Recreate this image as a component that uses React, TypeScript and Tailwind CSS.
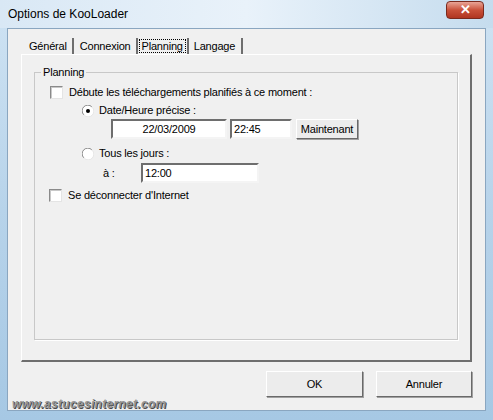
import React from 'react';

const font = { fontFamily: '"Liberation Sans", Arial, sans-serif' };

function Checkbox() {
  return (
    <span className="inline-block shrink-0 w-[13px] h-[13px] bg-white border border-t-[#8a8a8a] border-l-[#8a8a8a] border-b-[#e4e4e4] border-r-[#e4e4e4] shadow-[inset_1px_1px_0_#c8c8c8]" />
  );
}

function Radio({ checked }: { checked?: boolean }) {
  return (
    <svg width="12" height="12" viewBox="0 0 12 12" className="shrink-0">
      <circle cx="6" cy="6" r="5.5" fill="#fff" />
      <path d="M1.8 9.8 A5.2 5.2 0 0 1 9.8 1.8" fill="none" stroke="#8a8a8a" strokeWidth="1" />
      <path d="M10.2 2.2 A5.2 5.2 0 0 1 2.2 10.2" fill="none" stroke="#e6e6e6" strokeWidth="1" />
      {checked && <circle cx="6" cy="6" r="2" fill="#000" />}
    </svg>
  );
}

function Field({ children, className }: { children: React.ReactNode; className: string }) {
  return (
    <div
      className={`h-[20px] bg-white border-2 border-t-[#6e6e6e] border-l-[#6e6e6e] border-b-[#f4f4f4] border-r-[#f4f4f4] leading-[16px] text-black flex items-center ${className}`}
    >
      {children}
    </div>
  );
}

function WinButton({ label, className }: { label: string; className: string }) {
  return (
    <div
      className={`bg-[#ececec] border border-t-white border-l-white border-b-[#696969] border-r-[#696969] shadow-[1px_1px_0_#a0a0a0] flex items-center justify-center text-black ${className}`}
    >
      {label}
    </div>
  );
}

export default function App() {
  return (
    <div
      style={font}
      className="w-[493px] h-[420px] bg-gradient-to-b from-[#cfe3f3] via-[#b7d3ea] to-[#a6c8e4] flex flex-col overflow-hidden relative text-[11px] tracking-[-0.2px]"
    >
      {/* Title bar */}
      <div className="h-[28px] flex items-center justify-between pl-[8px] pr-[9px] bg-gradient-to-r from-[#d9e8f5] via-[#e9f2fa] to-[#c5dcee]">
        <span className="text-[12px] tracking-normal text-black">Options de KooLoader</span>
        <div className="w-[38px] h-[18px] -mt-[9px] rounded-[4px] bg-gradient-to-b from-[#e8a496] via-[#c9513a] to-[#b03520] border border-[#7a2a1e] flex items-center justify-center">
          <span className="text-white text-[13px] font-bold leading-none">✕</span>
        </div>
      </div>

      {/* Client area */}
      <div className="mx-[7px] mb-[9px] flex-1 bg-[#f0f0f0] border border-[#8aa6c0] flex flex-col px-[13px] pt-[7px]">
        {/* Tabs */}
        <div className="flex items-end h-[18px] pl-[2px] text-black">
          <div className="pl-[6px] pr-[5px] border-r-2 border-[#6e6e6e] leading-[16px]">Général</div>
          <div className="pl-[6px] pr-[5px] border-r-2 border-[#6e6e6e] leading-[16px]">Connexion</div>
          <div className="px-[2px] border-r-2 border-[#6e6e6e] leading-[16px]">
            <span className="outline-1 outline-dotted outline-black px-[2px]">Planning</span>
          </div>
          <div className="pl-[5px] pr-[6px] border-r-2 border-[#6e6e6e] leading-[16px]">Langage</div>
        </div>

        {/* Tab panel */}
        <div className="h-[308px] border border-t-white border-l-white border-b-[#6e6e6e] border-r-[#6e6e6e] border-b-2 border-r-2 px-[12px] pt-[17px]">
          {/* Group box */}
          <div className="relative h-[268px] border border-[#c8c8c8] shadow-[1px_1px_0_#fff] pl-[15px] pt-[12px] text-black">
            <span className="absolute -top-[8px] left-[6px] bg-[#f0f0f0] px-[2px] leading-[14px]">Planning</span>

            <div className="flex items-center gap-[6px] h-[14px]">
              <Checkbox />
              <span>Débute les téléchargements planifiés à ce moment :</span>
            </div>

            <div className="pl-[32px] mt-[5px] flex items-center gap-[5px] h-[13px]">
              <Radio checked />
              <span>Date/Heure précise :</span>
            </div>
            <div className="flex items-center mt-[2px] pl-[61px] gap-[3px]">
              <Field className="w-[116px] justify-center">22/03/2009</Field>
              <Field className="w-[62px] pl-[2px]">22:45</Field>
              <WinButton label="Maintenant" className="w-[62px] h-[20px] ml-[1px]" />
            </div>

            <div className="pl-[32px] mt-[8px] flex items-center gap-[5px] h-[13px]">
              <Radio />
              <span>Tous les jours :</span>
            </div>
            <div className="flex items-center mt-[3px] pl-[53px]">
              <span className="w-[38px]">à :</span>
              <Field className="w-[118px] pl-[2px] h-[19px]">12:00</Field>
            </div>

            <div className="flex items-center gap-[6px] h-[14px] mt-[5px] -ml-[1px]">
              <Checkbox />
              <span>Se déconnecter d'Internet</span>
            </div>
          </div>
        </div>

        {/* Bottom buttons */}
        <div className="flex justify-end gap-[13px] mt-[9px]">
          <WinButton label="OK" className="w-[97px] h-[26px]" />
          <WinButton label="Annuler" className="w-[96px] h-[26px]" />
        </div>
      </div>

      {/* Watermark */}
      <span className="absolute left-[12px] top-[395px] text-[12px] font-bold italic tracking-[0.3px] text-[#959595] [text-shadow:1px_1px_0_#4a4a4a]">
        www.astucesinternet.com
      </span>
    </div>
  );
}
